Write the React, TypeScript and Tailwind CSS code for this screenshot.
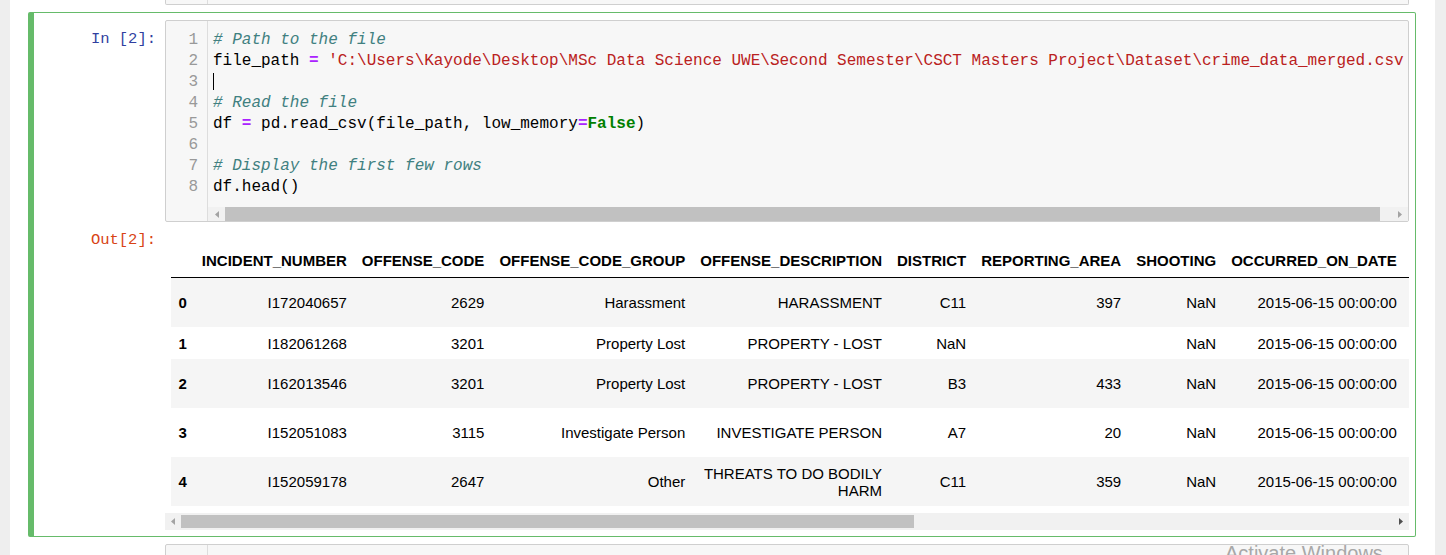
import type { ReactNode } from 'react'

const Eq = () => <span className="font-bold text-[#aa22ff]">=</span>
const Comment = ({ children }: { children: ReactNode }) => (
  <span className="italic text-[#408080]">{children}</span>
)

// the closing quote sits past the visible edge of the editor
const path =
  "'C:\\Users\\Kayode\\Desktop\\MSc Data Science UWE\\Second Semester\\CSCT Masters Project\\Dataset\\crime_data_merged.csv"

const codeLines: ReactNode[] = [
  <Comment># Path to the file</Comment>,
  <>
    file_path <Eq /> <span className="text-[#ba2121]">{path}</span>
  </>,
  <span className="inline-block h-[17px] w-px bg-black align-middle" />,
  <Comment># Read the file</Comment>,
  <>
    df <Eq /> pd.read_csv(file_path, low_memory<Eq />
    <span className="font-bold text-[#008000]">False</span>)
  </>,
  '',
  <Comment># Display the first few rows</Comment>,
  'df.head()',
]

const columns = [
  'INCIDENT_NUMBER',
  'OFFENSE_CODE',
  'OFFENSE_CODE_GROUP',
  'OFFENSE_DESCRIPTION',
  'DISTRICT',
  'REPORTING_AREA',
  'SHOOTING',
  'OCCURRED_ON_DATE',
]

const rows = [
  { h: 'h-[49px]', cells: ['I172040657', '2629', 'Harassment', 'HARASSMENT', 'C11', '397', 'NaN', '2015-06-15 00:00:00'] },
  { h: 'h-[32px]', cells: ['I182061268', '3201', 'Property Lost', 'PROPERTY - LOST', 'NaN', '', 'NaN', '2015-06-15 00:00:00'] },
  { h: 'h-[49px]', cells: ['I162013546', '3201', 'Property Lost', 'PROPERTY - LOST', 'B3', '433', 'NaN', '2015-06-15 00:00:00'] },
  { h: 'h-[49px]', cells: ['I152051083', '3115', 'Investigate Person', 'INVESTIGATE PERSON', 'A7', '20', 'NaN', '2015-06-15 00:00:00'] },
  { h: 'h-[49px]', cells: ['I152059178', '2647', 'Other', 'THREATS TO DO BODILY\nHARM', 'C11', '359', 'NaN', '2015-06-15 00:00:00'] },
]

function Arrow({ dir, color }: { dir: 'left' | 'right'; color: string }) {
  return (
    <svg width="4" height="7" viewBox="0 0 4 7">
      <path d={dir === 'left' ? 'M4 0 L0 3.5 L4 7 Z' : 'M0 0 L4 3.5 L0 7 Z'} fill={color} />
    </svg>
  )
}

function Prompt({ children, color }: { children: ReactNode; color: string }) {
  return (
    <div
      className={`w-[131px] shrink-0 pr-[9px] text-right font-['Liberation_Mono','DejaVu_Sans_Mono',monospace] text-[15.5px] leading-[21px] ${color}`}
    >
      {children}
    </div>
  )
}

export default function App() {
  return (
    <div className="relative h-[555px] overflow-hidden bg-[#eeeeee]">
      <div className="ml-[10px] h-full w-[1425px] bg-white">
        {/* previous cell, mostly scrolled away */}
        <div className="h-[12px] pl-[155px]">
          <div className="flex h-[5px] w-[1244px] rounded-b-[2px] border border-t-0 border-[#cfcfcf] bg-[#f7f7f7]">
            <div className="w-[42px] border-r border-[#dddddd]" />
          </div>
        </div>

        {/* selected cell */}
        <div className="ml-[18px] w-[1388px] rounded-[2px] border border-l-[6px] border-[#66bb6a] pt-[7px] pr-[6px] pb-[6px]">
          <div className="flex">
            <Prompt color="text-[#303f9f]">
              <div className="pt-[9px]">In&nbsp;[2]:</div>
            </Prompt>
            <div className="flex h-[202px] min-w-0 flex-1 rounded-[2px] border border-[#cfcfcf] bg-[#f7f7f7] font-['Liberation_Mono','DejaVu_Sans_Mono',monospace] text-[16px] leading-[21px]">
              <div className="w-[42px] shrink-0 border-r border-[#dddddd] pt-[9px] pr-[9px] text-right text-[#999999]">
                {codeLines.map((_, i) => (
                  <div key={i} className="h-[21px]">
                    {i + 1}
                  </div>
                ))}
              </div>
              <div className="flex min-w-0 flex-1 flex-col pt-[9px]">
                <div className="overflow-hidden pl-[5px] text-black">
                  {codeLines.map((line, i) => (
                    <div key={i} className="h-[21px] whitespace-pre">
                      {line}
                    </div>
                  ))}
                </div>
                <div className="mt-[9px] flex h-[14px] bg-[#f1f1f1]">
                  <div className="flex w-[17px] items-center justify-center">
                    <Arrow dir="left" color="#a3a3a3" />
                  </div>
                  <div className="w-[1155px] bg-[#c1c1c1]" />
                  <div className="flex-1" />
                  <div className="flex w-[17px] items-center justify-center">
                    <Arrow dir="right" color="#a3a3a3" />
                  </div>
                </div>
              </div>
            </div>
          </div>

          <div className="mt-[8px] flex">
            <Prompt color="text-[#d84315]">Out[2]:</Prompt>
            <div className="min-w-0 flex-1">
              <div className="overflow-hidden pt-[15px] pl-[6px]">
                <table className="border-separate border-spacing-0 font-['Liberation_Sans',Arial,sans-serif] text-[15px] leading-[17px] text-black">
                  <thead>
                    <tr>
                      <th className="border-b border-black px-[7.5px] pt-[6.5px] pb-[8.5px]" />
                      {columns.map((c, j) => (
                        <th
                          key={c}
                          className={`border-b border-black pt-[6.5px] pb-[8.5px] pl-[7.5px] text-right align-bottom font-bold whitespace-nowrap ${
                            j === columns.length - 1 ? 'pr-[12px]' : 'pr-[7.5px]'
                          }`}
                        >
                          {c}
                        </th>
                      ))}
                    </tr>
                  </thead>
                  <tbody>
                    {rows.map((r, i) => (
                      <tr key={i} className={i % 2 === 0 ? 'bg-[#f5f5f5]' : 'bg-white'}>
                        <th className={`${r.h} px-[7.5px] py-0 text-left align-middle font-bold`}>{i}</th>
                        {r.cells.map((v, j) => (
                          <td
                            key={j}
                            className={`${r.h} py-0 pl-[7.5px] text-right align-middle whitespace-pre-line ${
                              j === r.cells.length - 1 ? 'pr-[12px]' : 'pr-[7.5px]'
                            }`}
                          >
                            {v}
                          </td>
                        ))}
                      </tr>
                    ))}
                  </tbody>
                </table>
              </div>
              <div className="mt-[7px] flex h-[17px] bg-[#f1f1f1]">
                <div className="flex w-[16px] items-center justify-center">
                  <Arrow dir="left" color="#a3a3a3" />
                </div>
                <div className="my-[2px] w-[733px] bg-[#c1c1c1]" />
                <div className="flex-1" />
                <div className="flex w-[17px] items-center justify-center">
                  <Arrow dir="right" color="#505050" />
                </div>
              </div>
            </div>
          </div>
        </div>

        {/* next cell */}
        <div className="ml-[18px] w-[1388px] border border-l-[6px] border-transparent pt-[6px] pr-[6px]">
          <div className="flex">
            <div className="w-[131px] shrink-0" />
            <div className="flex h-[30px] flex-1 rounded-t-[2px] border border-[#cfcfcf] bg-[#f7f7f7]">
              <div className="w-[42px] border-r border-[#dddddd]" />
            </div>
          </div>
        </div>
      </div>

      <div className="absolute top-[543px] left-[1225px] font-['Liberation_Sans',Arial,sans-serif] text-[20px] leading-[20px] whitespace-nowrap text-[#a8a8a8]">
        Activate Windows
      </div>
    </div>
  )
}
